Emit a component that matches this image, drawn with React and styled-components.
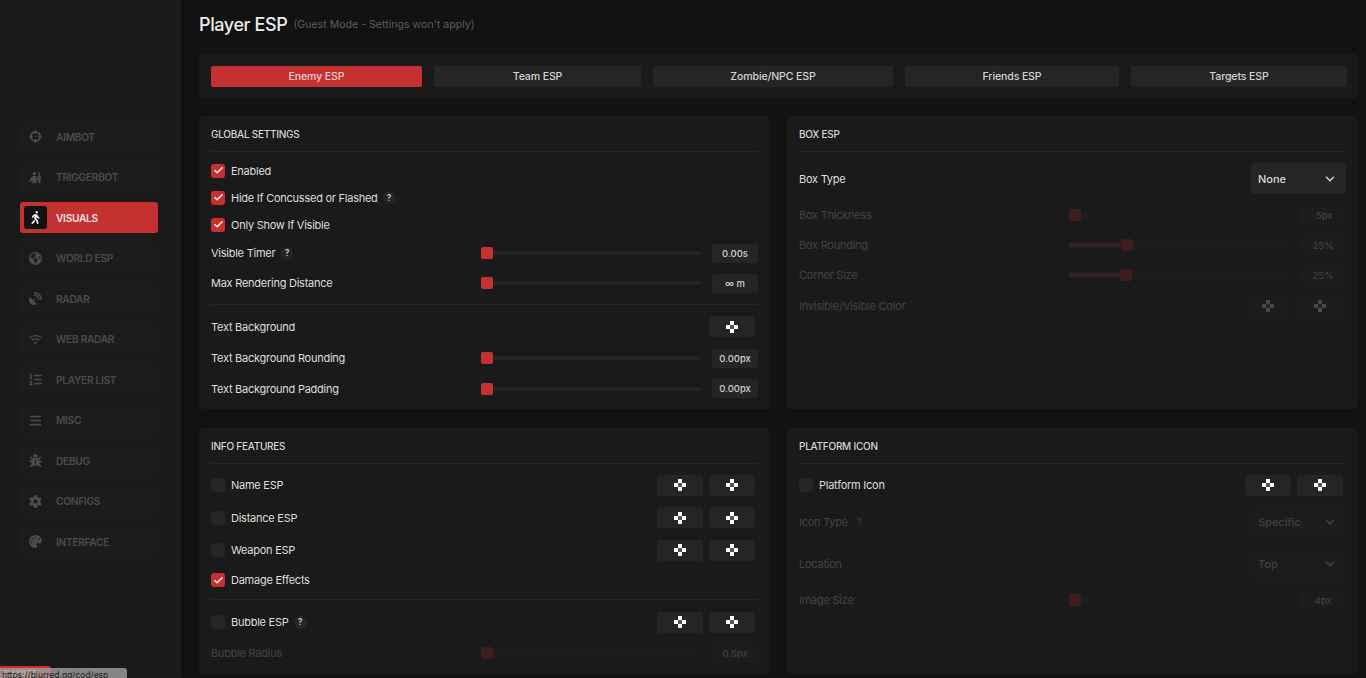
import React from 'react';
import styled, { createGlobalStyle } from 'styled-components';
import { ChevronDown, Check } from 'lucide-react';
import {
    FaCrosshairs, FaPersonRifle, FaPersonWalking, FaEarthAmericas, FaSatelliteDish,
    FaWifi, FaListOl, FaBars, FaBug, FaGear, FaPalette,
} from 'react-icons/fa6';

const GlobalStyle = createGlobalStyle`
    html, body {
        margin: 0;
        height: 100%;
        overflow: hidden;
        background: #121212;
    }
    * { box-sizing: border-box; }
`;

const Page = styled.div`
    display: flex;
    width: 1366px;
    height: 678px;
    overflow: hidden;
    position: relative;
    font-family: Inter, "Open Sans", sans-serif;
    color: #dcdcdc;
`;

const Sidebar = styled.nav`
    flex: 0 0 181px;
    background: #1a1a1a;
    box-shadow: 2px 0 6px rgba(0, 0, 0, 0.25);
    padding: 121px 23px 0 20px;
    display: flex;
    flex-direction: column;
    gap: 9.5px;
`;

const NavItem = styled.div`
    height: 31px;
    display: flex;
    align-items: center;
    gap: 9px;
    padding: 0 4px;
    border-radius: 3px;
    background: ${props => props.$active ? '#c53030' : '#1c1c1c'};
    color: ${props => props.$active ? '#f0e4e4' : '#4b4b4b'};
    font-size: 10.2px;
    letter-spacing: -0.3px;
    font-weight: 600;
    white-space: nowrap;
`;

const NavIcon = styled.span`
    width: 23px;
    height: 23px;
    border-radius: 3px;
    display: flex;
    align-items: center;
    justify-content: center;
    font-size: 13px;
    background: ${props => props.$active ? '#121212' : '#1b1b1b'};
    color: ${props => props.$active ? '#f2f2f2' : '#4b4b4b'};
`;

const Main = styled.main`
    flex: 1;
    padding: 0 8px 0 18px;
    display: flex;
    flex-direction: column;
`;

const Header = styled.header`
    height: 54px;
    padding-bottom: 6px;
    display: flex;
    align-items: center;
    gap: 6px;
`;

const Title = styled.h1`
    margin: 0;
    font-size: 18px;
    letter-spacing: -0.4px;
    font-weight: 500;
    color: #ececec;
`;

const Subtitle = styled.span`
    font-size: 10.6px;
    color: #5c5c5c;
`;

const TabBar = styled.div`
    display: grid;
    grid-template-columns: 211fr 207fr 240fr 214fr 216fr;
    gap: 12px;
    padding: 12px 11px 11px 12px;
    background: #1a1a1a;
    border-radius: 4px;
    margin-bottom: 18px;
`;

const Tab = styled.div`
    height: 21px;
    padding-bottom: 1px;
    display: flex;
    align-items: center;
    justify-content: center;
    border-radius: 2px;
    font-size: 10.6px;
    letter-spacing: -0.15px;
    font-weight: 500;
    background: ${props => props.$active ? '#c53030' : '#252525'};
    color: ${props => props.$active ? '#eecfcf' : '#d2d2d2'};
`;

const Columns = styled.div`
    display: grid;
    grid-template-columns: 571px 571px;
    grid-template-rows: 293px 246px;
    column-gap: 17px;
    row-gap: 19px;
`;

const Panel = styled.section`
    background: #1a1a1a;
    border-radius: 4px;
    padding: 12px;
`;

const PanelTitle = styled.h2`
    margin: 0 0 5px;
    height: 24px;
    padding-bottom: 11px;
    border-bottom: 1px solid #262626;
    font-size: 10px;
    letter-spacing: -0.25px;
    line-height: 13px;
    font-weight: 500;
    color: #d6d6d6;
`;

const Divider = styled.hr`
    margin: ${props => props.$margin || '6px 0 5px'};
    border: 0;
    border-top: 1px solid #262626;
`;

const Row = styled.div`
    height: ${props => props.$h || 30}px;
    display: flex;
    align-items: center;
    opacity: ${props => props.$dim ? 0.2 : 1};
`;

const Box = styled.span`
    width: 14px;
    height: 14px;
    margin-right: 6px;
    border-radius: 3px;
    display: flex;
    align-items: center;
    justify-content: center;
    color: #fff;
    background: ${props => props.$on ? '#c53030' : '#262626'};
`;

const Label = styled.span`
    font-size: 11px;
    letter-spacing: -0.25px;
    font-weight: 400;
    color: #dedede;
    white-space: nowrap;
`;

const FixedLabel = styled(Label)`
    flex: 0 0 270px;
    display: flex;
    align-items: center;
`;

const Help = styled.span`
    width: 13px;
    height: 13px;
    margin-left: 5px;
    border-radius: 50%;
    background: #252525;
    display: inline-flex;
    align-items: center;
    justify-content: center;
    font-size: 8.5px;
    font-weight: 600;
    color: #c8c8c8;
`;

const Track = styled.div`
    flex: 1;
    height: 4px;
    background: #252525;
    border-radius: 2px;
    position: relative;
`;

const Fill = styled.div`
    height: 100%;
    background: #c53030;
`;

const Thumb = styled.div`
    position: absolute;
    top: -4px;
    width: 12px;
    height: 12px;
    border-radius: 2px;
    background: #c53030;
`;

const Value = styled.span`
    flex: 0 0 46px;
    height: 19px;
    margin-left: 12px;
    border-radius: 3px;
    background: #252525;
    display: flex;
    align-items: center;
    justify-content: center;
    font-size: 9.5px;
    font-weight: 500;
    color: #cfcfcf;
`;

const Swatches = styled.div`
    margin-left: auto;
    margin-right: 3px;
    display: flex;
    gap: 6px;
`;

const SwatchButton = styled.span`
    width: 46px;
    height: 21px;
    border-radius: 3px;
    background: #252525;
    display: flex;
    align-items: center;
    justify-content: center;
`;

const Select = styled.div`
    margin-left: auto;
    width: 95px;
    height: 31px;
    padding: 0 9px 0 7px;
    border-radius: 3px;
    background: #252525;
    display: flex;
    align-items: center;
    justify-content: space-between;
    font-size: 11px;
    font-weight: 500;
    color: #d8d8d8;
`;

const StatusStack = styled.div`
    position: absolute;
    left: 0;
    bottom: 0;
`;

const StatusBlur = styled.span`
    position: absolute;
    left: 0;
    bottom: 0;
    width: 51px;
    height: 12px;
    padding-left: 2px;
    border-radius: 0 3px 0 0;
    background: #c53030;
    font-size: 8px;
    line-height: 14px;
    font-weight: 700;
    color: #e6e6e6;
`;

const StatusUrl = styled.span`
    position: relative;
    display: block;
    width: 127px;
    height: 10px;
    padding-left: 2px;
    border-radius: 0 3px 0 0;
    background: rgba(160, 160, 160, 0.8);
    font-size: 8.5px;
    line-height: 15px;
    color: #1e1e1e;
    white-space: nowrap;
    overflow: hidden;
`;

const PixelSvg = styled.svg`
    display: block;
`;

// little checker preview that sits in every colour button
const Swatch = () => (
    <SwatchButton>
        <PixelSvg width="12" height="12" viewBox="0 0 12 12">
            <rect x="4" y="4" width="4" height="4" fill="#555" />
            <rect x="4" y="0" width="4" height="4" fill="#fff" />
            <rect x="0" y="4" width="4" height="4" fill="#fff" />
            <rect x="8" y="4" width="4" height="4" fill="#fff" />
            <rect x="4" y="8" width="4" height="4" fill="#fff" />
        </PixelSvg>
    </SwatchButton>
);

const CheckRow = ({ on, label, help, swatches, h }) => (
    <Row $h={h}>
        <Box $on={on}>{on && <Check size={11} strokeWidth={3} />}</Box>
        <Label>{label}</Label>
        {help && <Help>?</Help>}
        {swatches && (
            <Swatches>
                {Array.from({ length: swatches }).map((_, i) => <Swatch key={i} />)}
            </Swatches>
        )}
    </Row>
);

const SliderRow = ({ label, help, value, pos = 0, dim, h }) => (
    <Row $h={h} $dim={dim}>
        <FixedLabel>{label}{help && <Help>?</Help>}</FixedLabel>
        <Track>
            <Fill style={{ width: pos }} />
            <Thumb style={{ left: pos }} />
        </Track>
        <Value>{value}</Value>
    </Row>
);

const SelectRow = ({ label, help, value, dim, h }) => (
    <Row $h={h} $dim={dim}>
        <Label>{label}</Label>
        {help && <Help>?</Help>}
        <Select>
            {value}
            <ChevronDown size={14} strokeWidth={2.5} />
        </Select>
    </Row>
);

const SwatchRow = ({ label, count, dim, h }) => (
    <Row $h={h} $dim={dim}>
        <Label>{label}</Label>
        <Swatches>
            {Array.from({ length: count }).map((_, i) => <Swatch key={i} />)}
        </Swatches>
    </Row>
);

const navItems = [
    ['AIMBOT', FaCrosshairs],
    ['TRIGGERBOT', FaPersonRifle],
    ['VISUALS', FaPersonWalking],
    ['WORLD ESP', FaEarthAmericas],
    ['RADAR', FaSatelliteDish],
    ['WEB RADAR', FaWifi],
    ['PLAYER LIST', FaListOl],
    ['MISC', FaBars],
    ['DEBUG', FaBug],
    ['CONFIGS', FaGear],
    ['INTERFACE', FaPalette],
];

const tabs = ['Enemy ESP', 'Team ESP', 'Zombie/NPC ESP', 'Friends ESP', 'Targets ESP'];

const App = () => (
    <Page>
        <GlobalStyle />
        <Sidebar>
            {navItems.map(([name, Icon]) => (
                <NavItem key={name} $active={name === 'VISUALS'}>
                    <NavIcon $active={name === 'VISUALS'}><Icon /></NavIcon>
                    {name}
                </NavItem>
            ))}
        </Sidebar>
        <Main>
            <Header>
                <Title>Player ESP</Title>
                <Subtitle>(Guest Mode - Settings won't apply)</Subtitle>
            </Header>
            <TabBar>
                {tabs.map((t, i) => <Tab key={t} $active={i === 0}>{t}</Tab>)}
            </TabBar>
            <Columns>
                <Panel>
                    <PanelTitle>GLOBAL SETTINGS</PanelTitle>
                    <CheckRow on label="Enabled" h={27} />
                    <CheckRow on label="Hide If Concussed or Flashed" help h={27} />
                    <CheckRow on label="Only Show If Visible" h={27} />
                    <SliderRow label="Visible Timer" help value="0.00s" />
                    <SliderRow label="Max Rendering Distance" value="∞ m" />
                    <Divider />
                    <SwatchRow label="Text Background" count={1} h={33} />
                    <SliderRow label="Text Background Rounding" value="0.00px" />
                    <SliderRow label="Text Background Padding" value="0.00px" h={31} />
                </Panel>
                <Panel>
                    <PanelTitle>BOX ESP</PanelTitle>
                    <SelectRow label="Box Type" value="None" h={43} />
                    <SliderRow dim label="Box Thickness" value=".5px" />
                    <SliderRow dim label="Box Rounding" value="25%" pos={52} />
                    <SliderRow dim label="Corner Size" value="25%" pos={51} />
                    <SwatchRow dim label="Invisible/Visible Color" count={2} h={32} />
                </Panel>
                <Panel>
                    <PanelTitle>INFO FEATURES</PanelTitle>
                    <CheckRow label="Name ESP" swatches={2} h={32} />
                    <CheckRow label="Distance ESP" swatches={2} h={33} />
                    <CheckRow label="Weapon ESP" swatches={2} h={32} />
                    <CheckRow on label="Damage Effects" h={28} />
                    <Divider $margin="5px 0 6px" />
                    <CheckRow label="Bubble ESP" help swatches={2} h={32} />
                    <SliderRow dim label="Bubble Radius" value="0.5px" />
                </Panel>
                <Panel>
                    <PanelTitle>PLATFORM ICON</PanelTitle>
                    <CheckRow label="Platform Icon" swatches={2} h={32} />
                    <SelectRow dim label="Icon Type" help value="Specific" h={42} />
                    <SelectRow dim label="Location" value="Top" h={42} />
                    <SliderRow dim label="Image Size" value="4px" />
                </Panel>
            </Columns>
        </Main>
        <StatusStack>
            <StatusBlur>BLURRED</StatusBlur>
            <StatusUrl>https://blurred.gg/cod/esp</StatusUrl>
        </StatusStack>
    </Page>
);

export default App;
